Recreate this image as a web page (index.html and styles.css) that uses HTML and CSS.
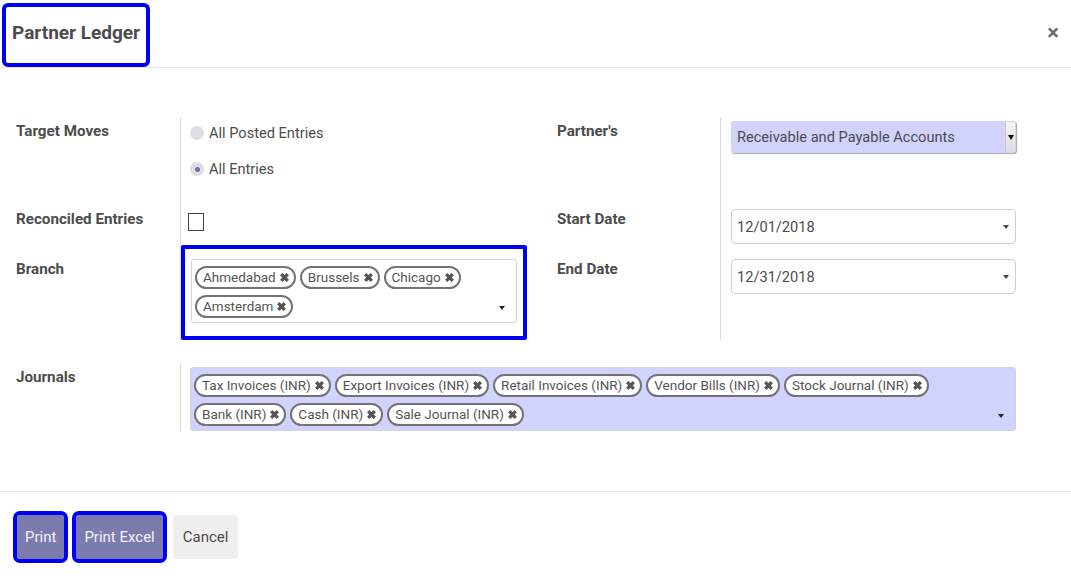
FILE: index.html
```html
<!DOCTYPE html>
<html lang="en">
<head>
<meta charset="utf-8">
<title>Partner Ledger</title>
<link rel="stylesheet" href="styles.css">
</head>
<body>
<div class="modal">
  <header class="mh">
    <h4 class="title">Partner Ledger</h4>
    <span class="close">×</span>
  </header>
  <main class="mb">
    <div class="form">
      <div class="lbl r1">Target Moves</div>
      <div class="cell sep r1 radios">
        <div class="radio-row"><span class="dot"></span>All Posted Entries</div>
        <div class="radio-row second"><span class="dot checked"></span>All Entries</div>
      </div>
      <div class="lbl lbl-right r1">Partner's</div>
      <div class="cell cell-right sep r1">
        <div class="select">Receivable and Payable Accounts<span class="sel-btn"><span class="tri"></span></span></div>
      </div>

      <div class="lbl">Reconciled Entries</div>
      <div class="cell sep"><span class="checkbox"></span></div>
      <div class="lbl lbl-right">Start Date</div>
      <div class="cell cell-right sep">
        <div class="date">12/01/2018<span class="caret"></span></div>
      </div>

      <div class="lbl">Branch</div>
      <div class="cell sep">
        <div class="tags-field branch hl">
          <span class="tag">Ahmedabad<svg class="x" viewBox="0 0 10 10"><path d="M2 2L8 8M8 2L2 8"/></svg></span>
          <span class="tag">Brussels<svg class="x" viewBox="0 0 10 10"><path d="M2 2L8 8M8 2L2 8"/></svg></span>
          <span class="tag">Chicago<svg class="x" viewBox="0 0 10 10"><path d="M2 2L8 8M8 2L2 8"/></svg></span>
          <span class="tag">Amsterdam<svg class="x" viewBox="0 0 10 10"><path d="M2 2L8 8M8 2L2 8"/></svg></span>
          <span class="caret fcaret"></span>
        </div>
      </div>
      <div class="lbl lbl-right">End Date</div>
      <div class="cell cell-right sep">
        <div class="date">12/31/2018<span class="caret"></span></div>
      </div>

      <div class="lbl jr">Journals</div>
      <div class="cell sep jr span3">
        <div class="tags-field journals">
          <span class="tag">Tax Invoices (INR)<svg class="x" viewBox="0 0 10 10"><path d="M2 2L8 8M8 2L2 8"/></svg></span>
          <span class="tag">Export Invoices (INR)<svg class="x" viewBox="0 0 10 10"><path d="M2 2L8 8M8 2L2 8"/></svg></span>
          <span class="tag">Retail Invoices (INR)<svg class="x" viewBox="0 0 10 10"><path d="M2 2L8 8M8 2L2 8"/></svg></span>
          <span class="tag">Vendor Bills (INR)<svg class="x" viewBox="0 0 10 10"><path d="M2 2L8 8M8 2L2 8"/></svg></span>
          <span class="tag">Stock Journal (INR)<svg class="x" viewBox="0 0 10 10"><path d="M2 2L8 8M8 2L2 8"/></svg></span>
          <span class="tag">Bank (INR)<svg class="x" viewBox="0 0 10 10"><path d="M2 2L8 8M8 2L2 8"/></svg></span>
          <span class="tag">Cash (INR)<svg class="x" viewBox="0 0 10 10"><path d="M2 2L8 8M8 2L2 8"/></svg></span>
          <span class="tag">Sale Journal (INR)<svg class="x" viewBox="0 0 10 10"><path d="M2 2L8 8M8 2L2 8"/></svg></span>
          <span class="caret fcaret"></span>
        </div>
      </div>
    </div>
  </main>
  <footer class="mf">
    <button class="btn primary marked">Print</button>
    <button class="btn primary marked excel">Print Excel</button>
    <button class="btn secondary">Cancel</button>
  </footer>
</div>
</body>
</html>
```

FILE: styles.css
```css
* { box-sizing: border-box; }
html, body { margin: 0; padding: 0; background: #fff; }
body {
  font-family: Roboto, "Liberation Sans", sans-serif;
  color: #4c4c4c;
  font-size: 14.6px;
  width: 1071px;
  height: 588px;
  overflow: hidden;
}

/* header */
.mh {
  height: 68px;
  border-bottom: 1px solid #e5e5e5;
  display: flex;
  justify-content: space-between;
  align-items: flex-start;
}
.title {
  margin: 7px 0 0 6px;
  height: 56px;
  padding: 0 6px 6px 6px;
  display: flex;
  align-items: center;
  font-size: 19px;
  font-weight: bold;
  color: #4c4c4c;
  outline: 4px solid #0000f2;
  border-radius: 2px;
}
.close {
  margin: 20px 12px 0 0;
  font-size: 22px;
  font-weight: bold;
  color: #6e6e6e;
  line-height: 26px;
}

/* body */
.mb {
  height: 423px;
  padding-top: 49px;
}
.form {
  margin-left: 16px;
  display: grid;
  grid-template-columns: 164px 360px 180px 296px;
  grid-template-rows: 88px 50px 85px auto;
}
.lbl {
  font-weight: bold;
  font-size: 15.2px;
  line-height: 20px;
  padding-top: 4px;
  color: #4c4c4c;
}
.lbl-right { padding-left: 17px; }
.cell {
  padding: 4px 0 0 9px;
  line-height: 20px;
}
.cell-right { padding-left: 10px; }
.sep { border-left: 1px solid #dcdcdc; }
.jr { margin-top: 23px; }
.span3 { grid-column: 2 / 5; padding-bottom: 1px; }

/* radios */
.radios { padding-top: 6px; }
.radio-row {
  display: flex;
  align-items: center;
  height: 20px;
}
.radio-row.second { margin-top: 16px; }
.dot {
  width: 14px;
  height: 14px;
  border-radius: 50%;
  background: #dedee6;
  margin-right: 5px;
  display: flex;
  align-items: center;
  justify-content: center;
}
.dot.checked::after {
  content: "";
  width: 5px;
  height: 5px;
  border-radius: 50%;
  background: #6f6ea8;
}

/* select */
.select {
  width: 285px;
  height: 32px;
  background: #d2d2ff;
  border-radius: 3px;
  display: flex;
  align-items: center;
  padding-left: 6px;
  box-shadow: 1px 1px 1px rgba(0,0,0,0.35);
}
.sel-btn {
  margin-left: auto;
  width: 10px;
  height: 30px;
  margin-right: 1px;
  background: linear-gradient(#f6f6f6, #dcdcdc);
  border-left: 1px solid #c8c8c8;
  display: flex;
  align-items: center;
  justify-content: center;
}
.tri {
  width: 0;
  height: 0;
  border-left: 3px solid transparent;
  border-right: 3px solid transparent;
  border-top: 5px solid #111;
}

/* checkbox */
.checkbox {
  display: block;
  width: 16px;
  height: 18px;
  margin: 4px 0 0 -2px;
  border: 1.5px solid #444;
}

/* dates */
.date {
  width: 285px;
  height: 35px;
  border: 1px solid #cfcfcf;
  border-radius: 4px;
  display: flex;
  align-items: center;
  padding-left: 5px;
}
.caret {
  width: 0;
  height: 0;
  border-left: 3px solid transparent;
  border-right: 3px solid transparent;
  border-top: 4px solid #444;
}
.date .caret { margin-left: auto; margin-right: 6px; }

/* tags fields */
.tags-field {
  position: relative;
  display: flex;
  flex-wrap: wrap;
  align-content: flex-start;
  gap: 6px 4px;
  padding: 6px 30px 4px 3px;
  border: 1px solid #d4d4d4;
  border-radius: 3px;
  min-height: 64px;
}
.branch {
  width: 326px;
  margin-left: 1px;
  background: #fff;
}
.journals {
  width: 826px;
  background: #d2d2ff;
}
.fcaret {
  position: absolute;
  right: 11px;
  bottom: 12px;
  border-top-color: #222;
}
.hl::after {
  content: "";
  position: absolute;
  top: -15px;
  left: -11px;
  right: -11px;
  bottom: -18px;
  border: 4px solid #0000f2;
  border-radius: 2px;
  pointer-events: none;
}
.tag {
  display: inline-flex;
  align-items: center;
  gap: 3px;
  height: 23px;
  padding: 0 4px 0 6px;
  border: 2px solid #737373;
  border-radius: 12px;
  background: #fff;
  font-size: 13.5px;
  color: #555;
  line-height: 1;
}
.x {
  width: 11px;
  height: 11px;
  stroke: #555;
  stroke-width: 3;
  fill: none;
}

/* footer */
.mf {
  border-top: 1px solid #e5e5e5;
  padding: 23px 0 0 17px;
  display: flex;
  align-items: flex-start;
}
.btn {
  height: 44px;
  border: none;
  border-radius: 3px;
  font-family: Roboto, "Liberation Sans", sans-serif;
  font-size: 15px;
  padding: 0 8px;
  margin: 0;
}
.primary {
  background: #7c7bad;
  color: #f2f2fa;
}
.marked {
  outline: 4px solid #0000f2;
  outline-offset: 0;
}
.excel { margin-left: 12px; }
.secondary {
  background: #f0eeee;
  color: #4c4c4c;
  padding: 0 10px;
  margin-left: 10px;
}
```
